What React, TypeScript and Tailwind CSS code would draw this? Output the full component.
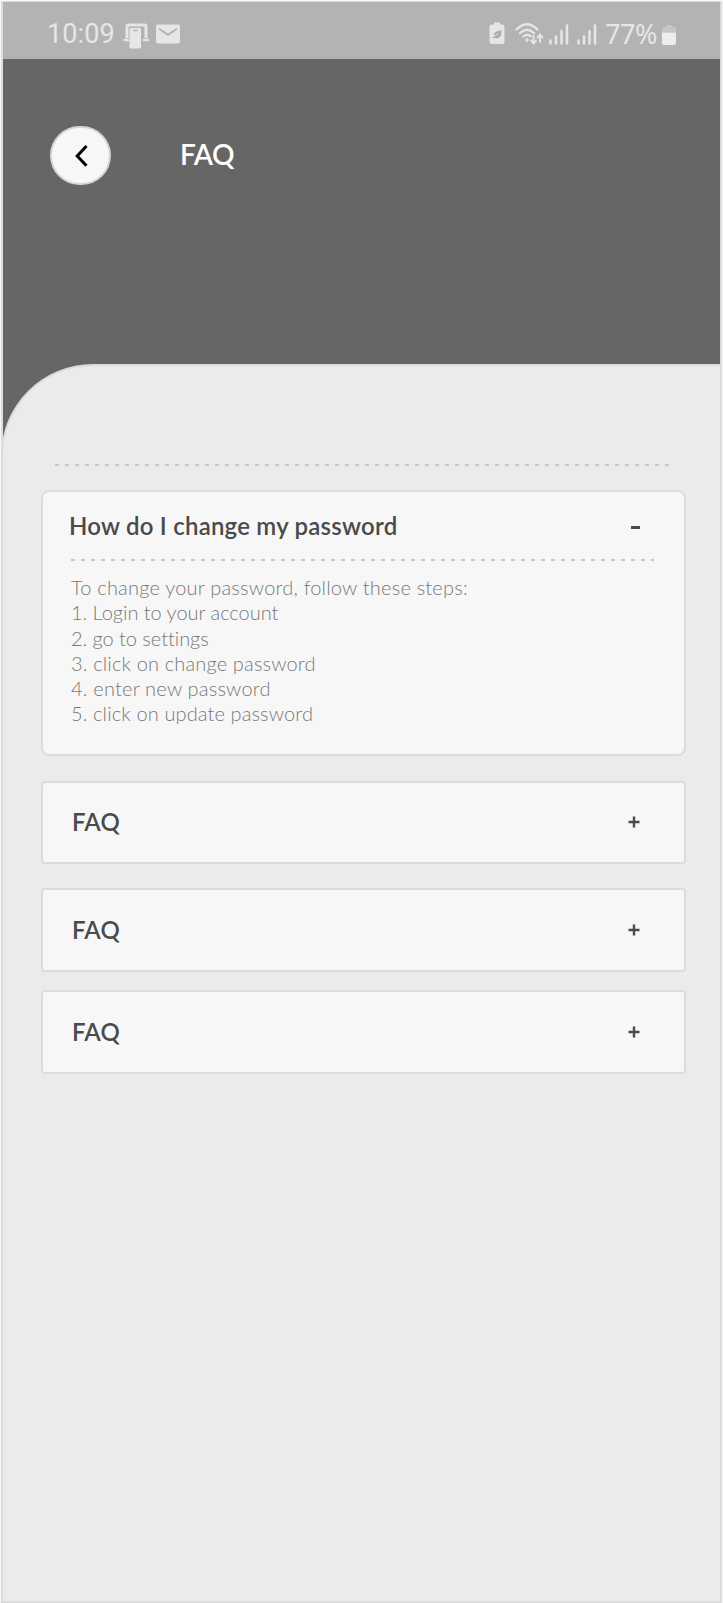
import { useState } from "react";

const steps = [
  { text: "To change your password, follow these steps:", spacing: "tracking-[0.2px]" },
  { text: "1. Login to your account", spacing: "tracking-[-0.03px]" },
  { text: "2. go to settings", spacing: "tracking-[-0.05px]" },
  { text: "3. click on change password", spacing: "tracking-[0.15px]" },
  { text: "4. enter new password", spacing: "tracking-[0.2px]" },
  { text: "5. click on update password", spacing: "tracking-[0.12px]" },
];

function DashedLine({ className }: { className: string }) {
  return (
    <div
      className={`h-[2px] bg-[repeating-linear-gradient(90deg,#c8c8c8_0_4px,transparent_4px_10px)] ${className}`}
    />
  );
}

function Signal() {
  return (
    <svg width="20" height="22" viewBox="0 0 20 22" fill="none" stroke="#e6e6e6" strokeWidth="2.5" strokeLinecap="round">
      <path d="M1.5 16.5v3M7 12.5v7M12.5 7v12.5M18 1.5v18" />
    </svg>
  );
}

function StatusBar() {
  return (
    <div className="flex h-[57px] items-start bg-[#b3b3b3] text-[#e6e6e6]">
      <span className="mt-[14px] ml-[44px] w-[75px] font-['Roboto',sans-serif] text-[27px] leading-[36px] tracking-[0.1px]">
        10:09
      </span>
      <svg className="mt-[20px]" width="28" height="28" viewBox="0 0 28 28">
        <path d="M5 16V4.500q0-1.500 1.500-1.500h16q1.500 0 1.500 1.500V16" fill="none" stroke="#e6e6e6" strokeWidth="3" />
        <path d="M2.500 18H6M22 18h4" stroke="#e6e6e6" strokeWidth="2.5" strokeLinecap="round" />
        <rect x="7.500" y="6" width="11.500" height="20.500" rx="1" fill="#e6e6e6" />
        <path d="M11.300 8.500h4" stroke="#b3b3b3" strokeWidth="1.6" />
      </svg>
      <svg className="mt-[22px] ml-[6px]" width="24" height="20" viewBox="0 0 24 20">
        <rect width="24" height="19" y="0.5" rx="2" fill="#e6e6e6" />
        <path d="m3 4.7 9 6.1 9-6.1" fill="none" stroke="#b3b3b3" strokeWidth="1.8" />
      </svg>
      <div className="mr-[44px] ml-auto flex items-start">
        <svg className="mt-[20px]" width="16" height="23" viewBox="0 0 16 23">
          <path d="M5 0.5h6v2H13q2.5 0 2.5 2.5v14.500q0 2.500-2.500 2.500H3Q0.500 22 0.500 19.500V5Q0.500 2.500 3 2.500h2z" fill="#e6e6e6" />
          <path d="M3 16 5.500 14C4 10 8 9 12.500 8.500c0 5-1.500 8.500-6 7.500" fill="#aaa" />
          <path d="m5.500 14.500 4-3" stroke="#e6e6e6" />
        </svg>
        <svg className="mt-[20px] ml-[10px]" width="29" height="24" viewBox="0 0 29 24" fill="none" stroke="#e6e6e6" strokeLinecap="round">
          <path d="M1.500 7.500q10.500-10.500 21 0M5 11q7-6.500 14 0M8.500 14.500q3.500-3 7 -.5" strokeWidth="2.300" />
          <circle cx="12" cy="18" r="1.700" fill="#e6e6e6" stroke="none" />
          <path d="M18.500 13.500V21m-2.500-2.500 2.500 3 2.500-3M25 20v-7m-2.500 2.500 2.500-3 2.500 3" strokeWidth="1.900" />
        </svg>
        <div className="mt-[22px] ml-[5px] flex gap-[8px]">
          <Signal />
          <Signal />
        </div>
        <span className="mt-[14px] ml-[8px] w-[57px] font-['Noto_Sans',sans-serif] text-[27px] leading-[36px] tracking-[-0.4px]">
          77%
        </span>
        <svg className="mt-[23px]" width="14" height="21" viewBox="0 0 14 21">
          <path d="M0 7V4q0-2 2-2h2V0h6v2h2q2 0 2 2v3z" fill="#c6c6c6" />
          <path d="M0 7.500h14V18q0 2-2 2H2q-2 0-2-2z" fill="#ededed" />
        </svg>
      </div>
    </div>
  );
}

function FaqRow({ className }: { className: string }) {
  return (
    <button
      type="button"
      className={`flex w-[645px] items-center border-2 border-[#dcdcdc] bg-[#f7f7f7] pr-[44px] pl-[29px] text-left ${className}`}
    >
      <span className="text-2xl leading-[30px] font-semibold tracking-[0.2px]">FAQ</span>
      <svg className="ml-auto" width="12" height="12" viewBox="0 0 12 12" stroke="#4a4a4a" strokeWidth="2.400">
        <path d="M0.500 6h11M6 0.500v11" />
      </svg>
    </button>
  );
}

export default function App() {
  const [open, setOpen] = useState(true);

  return (
    <div className="h-[1603px] w-[723px] bg-[#f7f7f7] pt-px pl-px font-['Lato',sans-serif]">
      <div className="flex h-[1602px] w-[721px] flex-col border-2 border-t-1 border-[#dcdcdc] bg-[#666666]">
        <StatusBar />
        <header className="flex h-[305px] shrink-0 items-start">
          <button
            type="button"
            aria-label="Back"
            className="mt-[67px] ml-[47px] flex h-[59px] w-[61px] items-center justify-center rounded-full border-2 border-[#d5d5d5] bg-[#f7f7f7]"
          >
            <svg width="14" height="24" viewBox="0 0 14 24" fill="none" stroke="#000" strokeWidth="3">
              <path d="M12.500 2 3.200 12l9.300 9.800" />
            </svg>
          </button>
          <h1 className="mt-[77px] ml-[69px] text-[28px] leading-[36px] font-semibold tracking-[-0.4px] text-white">FAQ</h1>
        </header>
        <main className="-ml-[2px] flex w-[721px] flex-1 flex-col rounded-tl-[92px] border-t-2 border-r-2 border-l-2 border-[#dcdcdc] bg-[#ebebeb] text-[#4a4a4a]">
          <DashedLine className="mt-[98px] ml-[52px] w-[615px] shrink-0" />
          <section className="mt-[24px] ml-[38px] h-[266px] w-[645px] shrink-0 rounded-[8px] border-2 border-[#dcdcdc] bg-[#f7f7f7]">
            <button
              type="button"
              onClick={() => setOpen(!open)}
              className="mt-[18px] flex w-full items-center pr-[44px] pl-[26px] text-left"
            >
              <span className="text-2xl leading-[32px] font-semibold tracking-[0.22px] whitespace-nowrap">
                How do I change my password
              </span>
              <span className="mt-[2px] ml-auto h-[3px] w-[9px] bg-[#4a4a4a]" />
            </button>
            <DashedLine className="mt-[17px] ml-[28px] w-[583px]" />
            {open && (
              <div className="mt-[14px] ml-[28px] text-xl leading-[25.300px] font-light text-[#787878]">
                {steps.map((step) => (
                  <p key={step.text} className={`w-fit whitespace-nowrap ${step.spacing}`}>
                    {step.text}
                  </p>
                ))}
              </div>
            )}
          </section>
          <div className="ml-[38px] flex flex-col">
            <FaqRow className="mt-[25px] h-[83px] rounded-[4px] pb-px" />
            <FaqRow className="mt-[24px] h-[84px] rounded-[4px]" />
            <FaqRow className="mt-[18px] h-[84px] rounded-[4px]" />
          </div>
        </main>
      </div>
    </div>
  );
}
